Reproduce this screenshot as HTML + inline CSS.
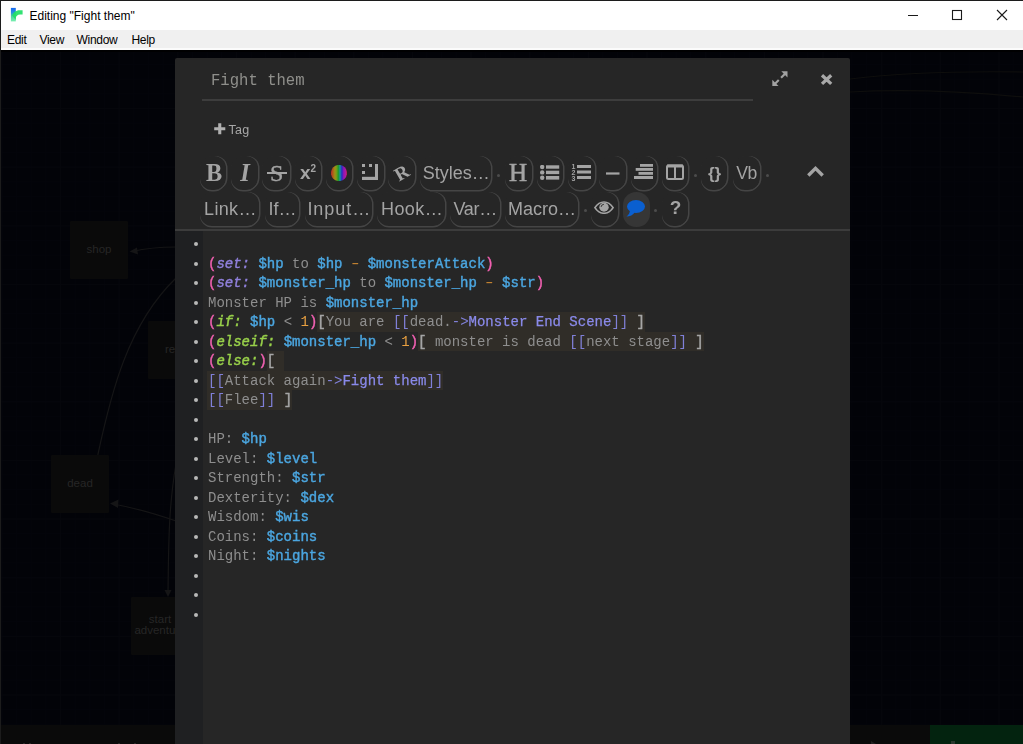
<!DOCTYPE html>
<html><head><meta charset="utf-8"><title>Editing "Fight them"</title>
<style>
*{box-sizing:border-box;margin:0;padding:0}
html,body{width:1023px;height:744px;overflow:hidden;background:#020308;font-family:"Liberation Sans",sans-serif}
#win{position:absolute;left:0;top:0;width:1023px;height:744px;overflow:hidden}
#bl{position:absolute;left:0;top:0;width:1px;height:744px;background:#1c1c1c}
#bt{position:absolute;left:0;top:0;width:1023px;height:1px;background:#1c1c1c}
#titlebar{position:absolute;left:1px;top:1px;width:1022px;height:29px;background:#fff}
#titlebar .t{position:absolute;left:28.5px;top:8px;font-size:12px;color:#000;letter-spacing:0}
#menubar{position:absolute;left:1px;top:30px;width:1022px;height:20px;background:#f0f0f0;border-bottom:2px solid #fbfbfb}
#menubar span{position:absolute;top:3px;font-size:12px;color:#000;letter-spacing:-0.3px}
#bg{position:absolute;left:1px;top:50px;width:1022px;height:694px;background-color:#020308;background-image:linear-gradient(#05060b 1px,transparent 1px),linear-gradient(90deg,#05060b 1px,transparent 1px),linear-gradient(#03040a 1px,transparent 1px),linear-gradient(90deg,#03040a 1px,transparent 1px);background-size:58.664px 58.664px,58.664px 58.664px,14.666px 14.666px,14.666px 14.666px;background-position:0.4px -0.6px}
.psg{position:absolute;width:58px;height:58px;background:#0a0a0a;color:#262626;font-size:11.5px;text-align:center;line-height:11.5px;display:flex;align-items:center;justify-content:center;border-radius:1px}
#botbar{position:absolute;left:1px;top:725px;width:1022px;height:19px;background:#0a0a0a}
#green{position:absolute;left:930px;top:725px;width:93px;height:19px;background:#03230f}
#dlg{will-change:transform;position:absolute;left:175px;top:57px;width:675px;height:687px;background:#262626;clip-path:inset(1px 0 0 0 round 2px 2px 0 0);overflow:hidden}
#title{position:absolute;left:36px;top:14.5px;font:15.6px "Liberation Mono",monospace;color:#8f8f8b}
#uline{position:absolute;left:27px;top:42px;width:550.7px;height:2px;background:#3d3d3d}
#tag{position:absolute;left:39px;top:65px;font-size:12px;color:#a8a8a8;width:60px;height:14px}
#sep{position:absolute;left:0;top:172px;width:675px;height:2px;background:#3c3c3c}
#gutter{position:absolute;left:0;top:174px;width:28px;height:520px;background:#1f2022}
#code{position:absolute;left:0;top:178px;width:675px;font:14px/19.5px "Liberation Mono",monospace;color:#8e8e8e;white-space:pre}
.ln{position:relative;height:19.5px;padding-left:33px}
.ln:before{content:"";position:absolute;left:19px;top:7px;width:4px;height:4px;border-radius:50%;background:#b8b8b8}
.m{color:#f060b0;-webkit-text-stroke:0.4px #f060b0}
.n{color:#9080dc;font-style:italic;-webkit-text-stroke:0.4px #9080dc}
.c{color:#98d04a;font-style:italic;-webkit-text-stroke:0.45px #98d04a}
.v{color:#4ba6e0;-webkit-text-stroke:0.4px #4ba6e0}
.o{color:#c08030;display:inline-block;transform:scaleX(1.5)}
.num{color:#e8a040}
.h{background:#302d28;padding:1.85px 0;-webkit-box-decoration-break:clone;box-decoration-break:clone}
.lk{color:#8080d8}
.lt{color:#8a8aea;-webkit-text-stroke:0.25px #8a8aea}

.tb{position:absolute;height:35px;padding-top:1.3px;padding-left:1.5px;box-shadow:1.5px 0 0 0 #454545,0 1.5px 0 0 #454545;border-radius:12px;color:#a4a4a4;display:flex;align-items:center;justify-content:center;font-size:18px;white-space:nowrap}
.r1{top:99px;height:33.6px}.r2{top:134.5px;height:34.2px}
.tb svg{display:block}
.dot{position:absolute;width:3px;height:3px;border-radius:50%;background:#4c4c4c}
.ser{font-family:"Liberation Serif",serif}
.hb{color:#a6a6a6;-webkit-text-stroke:0.45px #a6a6a6}
.hs{padding-left:1.5px;margin-left:-1.5px}
.mk{position:absolute;top:742.5px;height:1.5px;background:#262626}
#topshade{position:absolute;left:1px;top:50px;width:1022px;height:1.5px;background:#000001}
</style></head><body>
<div id="win">
<div id="bg"></div>
<svg id="arrows" width="1023" height="744" viewBox="0 0 1023 744" style="position:absolute;left:0;top:0" fill="none" stroke="#151516" stroke-width="1.2">
<path d="M176 247 C160 247 145 248.500 132 251.500"/>
<path d="M137 247.500 L129.500 251.500 L138 254.500" fill="#151516" stroke="none"/>
<path d="M176 278 C127.6 324.800 111.100 392.800 97.800 455"/>
<path d="M176 521 C150 512 130 507 113 504"/>
<path d="M118.500 499.500 L110 503.500 L118 508" fill="#151516" stroke="none"/>
<path d="M176 464 C168.100 509.300 168.700 550.800 168 592"/>
<path d="M164.500 590 L168 597 L171.500 590" fill="#151516" stroke="none"/>
<path d="M850 79 C900 73 960 71 1023 72" stroke="#0e0e0d"/>
<path d="M850 92 C900 89 960 91 1023 97" stroke="#0e0e0d"/>
</svg>
<div class="psg" style="left:70px;top:221px">shop</div>
<div class="psg" style="left:148px;top:321px;justify-content:flex-start;padding-left:17px">re</div>
<div class="psg" style="left:51px;top:455px">dead</div>
<div class="psg" style="left:131px;top:597px;padding-bottom:1.5px">start<br>adventure</div>
<div id="topshade"></div><div id="botbar"></div><div id="green"></div><div class="mk" style="left:23px;width:2px"></div><div class="mk" style="left:29px;width:2px"></div><div class="mk" style="left:118px;width:2px"></div><div class="mk" style="left:134px;width:2px"></div><div class="mk" style="left:871px;width:5px;top:741px;height:3px;background:#202020;clip-path:polygon(0 0,100% 100%,0 100%)"></div><div class="mk" style="left:951px;width:4px;top:741px;height:3px;background:#28382e"></div>

<div id="titlebar"><svg style="position:absolute;left:9px;top:6px" width="14" height="15" viewBox="0 0 14 15"><defs><linearGradient id="tw" x1="0" x2="0" y1="0" y2="1"><stop offset="0" stop-color="#1668f0"/><stop offset="0.35" stop-color="#2b8fe0"/><stop offset="0.6" stop-color="#45cfa0"/><stop offset="1" stop-color="#7af0b0"/></linearGradient></defs><rect x="0.900" y="0.900" width="4.900" height="13.500" fill="url(#tw)"/><path d="M12.600 3.200 V7.600 H10 C7.500 7.600 5.800 9.300 5.800 11.500 V13 L2.300 8.500 C3 5.500 6 3.200 9.500 3.200 Z" fill="#22e066" opacity="0.92"/></svg><span class="t">Editing "Fight them"</span>
<svg style="position:absolute;left:906px;top:8px" width="102" height="14" viewBox="0 0 102 14" fill="none" stroke="#1a1a1a" stroke-width="1"><path d="M1 6.500 H11"/><rect x="45.500" y="1.500" width="9" height="9" stroke-width="1.100"/><path d="M90 1 L100 11 M100 1 L90 11" stroke-width="1.100"/></svg></div>
<div id="menubar"><span style="left:6px">Edit</span><span style="left:38.500px">View</span><span style="left:75.500px">Window</span><span style="left:130.500px">Help</span></div>

<div id="dlg">
<div id="title">Fight them</div>
<div id="uline"></div>
<svg style="position:absolute;left:596.5px;top:14px" width="16" height="16" viewBox="0 0 16 16" fill="#a2a2a2" stroke="none"><path d="M9.300 0.300 H15.500 V6.500 Z"/><path d="M0.300 8.800 V15 H6.500 Z"/><path d="M13.300 1 L14.800 2.500 L9.800 7.500 L8.300 6 Z"/><path d="M6 8.300 L7.500 9.800 L2.500 14.800 L1 13.300 Z"/></svg>
<svg style="position:absolute;left:645px;top:16px" width="14" height="14" viewBox="0 0 14 14" stroke="#a8a8a8" stroke-width="3.300" fill="none"><path d="M2 2.300 L11.200 10.900 M11.200 2.300 L2 10.900"/></svg>
<div id="tag"><svg width="12" height="12" viewBox="0 0 12 12" style="position:absolute;left:0;top:1.200px"><path d="M4.200 0.200 H7.300 V4.200 H11.300 V7.300 H7.300 V11.200 H4.200 V7.300 H0.200 V4.200 H4.200 Z" fill="#b0b0b0"/></svg><span style="position:absolute;left:14.5px;top:0.8px;font-size:12.5px;letter-spacing:0.3px">Tag</span></div>

<div id="toolbar">
<div class="tb r1" style="left:25px;width:26.0px;"><span style="position:relative;left:0.3px;top:-0.3px;display:block"><span class="ser" style="font-size:24.3px;font-weight:bold">B</span></span></div>
<div class="tb r1" style="left:56px;width:27.0px;"><span style="position:relative;left:-0.3px;top:-0.3px;display:block"><span class="ser" style="font-size:24.5px;font-style:italic;font-weight:bold">I</span></span></div>
<div class="tb r1" style="left:87px;width:28.0px;"><span class="ser" style="font-size:24px;position:relative;-webkit-text-stroke:0.4px #a4a4a4">S<i style="position:absolute;left:-3.2px;right:-3.2px;top:12.2px;height:2px;background:#a4a4a4"></i></span></div>
<div class="tb r1" style="left:120px;width:26.19999999999999px;"><span style="position:relative;left:-0.9px;top:0px;display:block"><span style="font-size:19px;font-weight:bold">x<span style="font-size:10px;position:relative;top:-7.5px">2</span></span></span></div>
<div class="tb r1" style="left:150.5px;width:26.5px;"><span style="position:relative;left:-0.5px;top:-0.9px;display:block"><svg width="16" height="16" viewBox="0 0 16 16"><defs><linearGradient id="rb" x1="0" x2="1" y1="0" y2="0"><stop offset="0" stop-color="#b02828"/><stop offset="0.12" stop-color="#b05c18"/><stop offset="0.25" stop-color="#a09018"/><stop offset="0.36" stop-color="#6aa018"/><stop offset="0.46" stop-color="#1f9a2a"/><stop offset="0.56" stop-color="#1a8fa0"/><stop offset="0.68" stop-color="#2a2ac0"/><stop offset="0.78" stop-color="#8a18b4"/><stop offset="0.9" stop-color="#b018a0"/><stop offset="1" stop-color="#b0204a"/></linearGradient></defs><circle cx="8" cy="8" r="8.1" fill="url(#rb)"/></svg></span></div>
<div class="tb r1" style="left:182px;width:26.5px;"><span style="position:relative;left:-0.8px;top:-1.9px;display:block"><svg width="16" height="16" viewBox="0 0 16 16" fill="#a4a4a4"><rect x="0" y="12.8" width="16" height="3.2"/><rect x="13" y="0" width="3" height="16"/><rect x="0" y="0" width="3" height="3"/><rect x="7" y="0" width="3" height="3"/><rect x="0" y="7" width="3" height="3"/></svg></span></div>
<div class="tb r1" style="left:213px;width:27.0px;"><span class="ser" style="font-size:19px;font-weight:bold;transform:rotate(-30deg);display:inline-block">R</span></div>
<div class="tb r1" style="left:245px;width:71.0px;">Styles…</div>
<div class="dot" style="left:322.2px;top:116.80000000000001px"></div>
<div class="tb r1" style="left:330px;width:26.5px;"><span style="position:relative;left:-1px;top:-0.5px;display:block"><span class="ser" style="font-size:25px;-webkit-text-stroke:0.55px #a4a4a4">H</span></span></div>
<div class="tb r1" style="left:362px;width:26.0px;"><span style="position:relative;left:-0.5px;top:-0.8px;display:block"><svg width="20" height="15" viewBox="0 0 20 15" fill="#a4a4a4"><circle cx="2.2" cy="2" r="2.2"/><circle cx="2.2" cy="7.4" r="2.2"/><circle cx="2.2" cy="12.8" r="2.2"/><rect x="6" y="0.3" width="13.2" height="3.4"/><rect x="6" y="5.7" width="13.2" height="3.4"/><rect x="6" y="11" width="13.2" height="3.6"/></svg></span></div>
<div class="tb r1" style="left:393px;width:26.700000000000045px;"><span style="position:relative;left:-1px;top:-1px;display:block"><svg width="20" height="18" viewBox="0 0 20 18" fill="#a4a4a4"><rect x="6" y="2" width="14" height="3"/><rect x="6" y="7.5" width="14" height="3"/><rect x="6" y="13" width="14" height="3"/><text x="0.6" y="5.5" font-family="Liberation Sans,sans-serif" font-weight="bold" font-size="7">1</text><text x="0.6" y="11.5" font-family="Liberation Sans,sans-serif" font-weight="bold" font-size="7">2</text><text x="0.6" y="17.7" font-family="Liberation Sans,sans-serif" font-weight="bold" font-size="7">3</text></svg></span></div>
<div class="tb r1" style="left:424px;width:27.0px;"><span style="position:relative;left:0.2px;top:0.5px;display:block"><svg width="14" height="3" viewBox="0 0 14 3"><rect x="0" y="0.4" width="13.5" height="2.2" fill="#a4a4a4"/></svg></span></div>
<div class="tb r1" style="left:455.5px;width:26.799999999999955px;"><span style="position:relative;left:-1px;top:-1.5px;display:block"><svg width="19" height="15" viewBox="0 0 19 15" fill="#a4a4a4"><rect x="6" y="0" width="13" height="2.8"/><rect x="1.7" y="4" width="17.3" height="2.8"/><rect x="4.5" y="8" width="14.5" height="2.8"/><rect x="0" y="12" width="19" height="3"/></svg></span></div>
<div class="tb r1" style="left:487px;width:25.5px;"><span style="position:relative;left:-0.8px;top:-1.7px;display:block"><svg width="18" height="16" viewBox="0 0 18 16" fill="none" stroke="#a4a4a4"><rect x="1" y="1.5" width="16" height="13.5" rx="1.5" stroke-width="2"/><line x1="1" y1="2" x2="17" y2="2" stroke-width="3"/><line x1="9" y1="2" x2="9" y2="15" stroke-width="2"/></svg></span></div>
<div class="dot" style="left:518.8px;top:116.80000000000001px"></div>
<div class="tb r1" style="left:526px;width:25.5px;"><span style="position:relative;left:0px;top:0.3px;display:block"><span style="font-size:17px;font-weight:bold">{}</span></span></div>
<div class="tb r1" style="left:557.5px;width:27.5px;"><span style="position:relative;left:-0.5px;top:0px;display:block"><span style="letter-spacing:-0.6px;font-size:17.6px">Vb</span></span></div>
<div class="dot" style="left:590.9px;top:116.80000000000001px"></div>
<svg style="position:absolute;left:630px;top:107px" width="21" height="15" viewBox="0 0 21 15"><path d="M3.3 11.5 L10.5 4.3 L17.7 11.5" fill="none" stroke="#a4a4a4" stroke-width="3.4"/></svg>
<div class="tb r2" style="left:25px;width:59.0px;"><span style="position:relative;left:0.2px;top:0px;display:block"><span style="letter-spacing:0.35px">Link…</span></span></div>
<div class="tb r2" style="left:89.5px;width:34.5px;">If…</div>
<div class="tb r2" style="left:129.5px;width:67.0px;"><span style="position:relative;left:0.5px;top:0px;display:block"><span style="letter-spacing:0.95px">Input…</span></span></div>
<div class="tb r2" style="left:202px;width:67.5px;"><span style="position:relative;left:0.6px;top:0px;display:block"><span style="letter-spacing:0.45px">Hook…</span></span></div>
<div class="tb r2" style="left:275px;width:49.5px;"><span style="position:relative;left:-0.3px;top:0px;display:block"><span style="letter-spacing:-0.3px">Var…</span></span></div>
<div class="tb r2" style="left:330px;width:72.5px;">Macro…</div>
<div class="dot" style="left:408.5px;top:152.0px"></div>
<div class="tb r2" style="left:416px;width:26.5px;"><span style="position:relative;left:-1.1px;top:-1.4px;display:block"><svg width="20" height="13.2" viewBox="0 0 20 14" preserveAspectRatio="none"><path d="M0.900 7 C3.600 2.600 6.500 1 10 1 C13.500 1 16.400 2.600 19.100 7 C16.400 11.400 13.500 13 10 13 C6.500 13 3.600 11.400 0.900 7 Z" fill="none" stroke="#a4a4a4" stroke-width="1.700"/><circle cx="10" cy="6.600" r="4.700" fill="#a4a4a4"/><path d="M7.100 6.300 A3 3 0 0 1 9.900 3.500" fill="none" stroke="#262626" stroke-width="0.900"/></svg></span></div>
<div class="tb r2" style="left:448px;width:25.5px;background:#363636;box-shadow:none;border-radius:13px;height:35px;width:27px;margin-left:-0.5px"><span style="position:relative;left:-1.4px;top:-0.9px;display:block"><svg width="19" height="17" viewBox="0 0 19 17"><ellipse cx="10" cy="6.5" rx="9" ry="6.5" fill="#0a5fd0"/><path d="M4 9 C4 13 2.5 15 0.5 16.5 C4 16.5 7 15 9 12 Z" fill="#0a5fd0"/></svg></span></div>
<div class="dot" style="left:479.29999999999995px;top:152.0px"></div>
<div class="tb r2" style="left:487px;width:25.5px;"><span style="position:relative;left:0px;top:-1px;display:block"><span style="font-size:19px;font-weight:bold">?</span></span></div>
</div>
<div id="sep"></div>
<div id="gutter"></div>
<div id="code"><div class="ln"> </div><div class="ln"><span class="m">(</span><span class="n">set:</span> <span class="v">$hp</span> to <span class="v">$hp</span> <span class="o">-</span> <span class="v">$monsterAttack</span><span class="m">)</span></div><div class="ln"><span class="m">(</span><span class="n">set:</span> <span class="v">$monster_hp</span> to <span class="v">$monster_hp</span> <span class="o">-</span> <span class="v">$str</span><span class="m">)</span></div><div class="ln">Monster HP is <span class="v">$monster_hp</span></div><div class="ln"><span class="m">(</span><span class="c">if:</span> <span class="v">$hp</span> &lt; <span class="num">1</span><span class="m">)</span><span class="h"><span class="hb">[</span>You are <span class="lk">[[</span>dead.<span class="lk">-&gt;</span><span class="lt">Monster End Scene</span><span class="lk">]]</span> <span class="hb">]</span></span></div><div class="ln"><span class="m">(</span><span class="c">elseif:</span> <span class="v">$monster_hp</span> &lt; <span class="num">1</span><span class="m">)</span><span class="h"><span class="hb">[</span> monster is dead <span class="lk">[[</span>next stage<span class="lk">]]</span> <span class="hb">]</span></span></div><div class="ln"><span class="m">(</span><span class="c">else:</span><span class="m">)</span><span class="h"><span class="hb">[</span> </span></div><div class="ln"><span class="h hs"><span class="lk">[[</span>Attack again<span class="lk">-&gt;</span><span class="lt">Fight them</span><span class="lk">]]</span></span></div><div class="ln"><span class="h hs"><span class="lk">[[</span>Flee<span class="lk">]]</span> <span class="hb">]</span></span></div><div class="ln"> </div><div class="ln">HP: <span class="v">$hp</span></div><div class="ln">Level: <span class="v">$level</span></div><div class="ln">Strength: <span class="v">$str</span></div><div class="ln">Dexterity: <span class="v">$dex</span></div><div class="ln">Wisdom: <span class="v">$wis</span></div><div class="ln">Coins: <span class="v">$coins</span></div><div class="ln">Night: <span class="v">$nights</span></div><div class="ln"> </div><div class="ln"> </div><div class="ln"> </div></div>
</div>
<div id="bl"></div><div id="bt"></div>
</div>
</body></html>
